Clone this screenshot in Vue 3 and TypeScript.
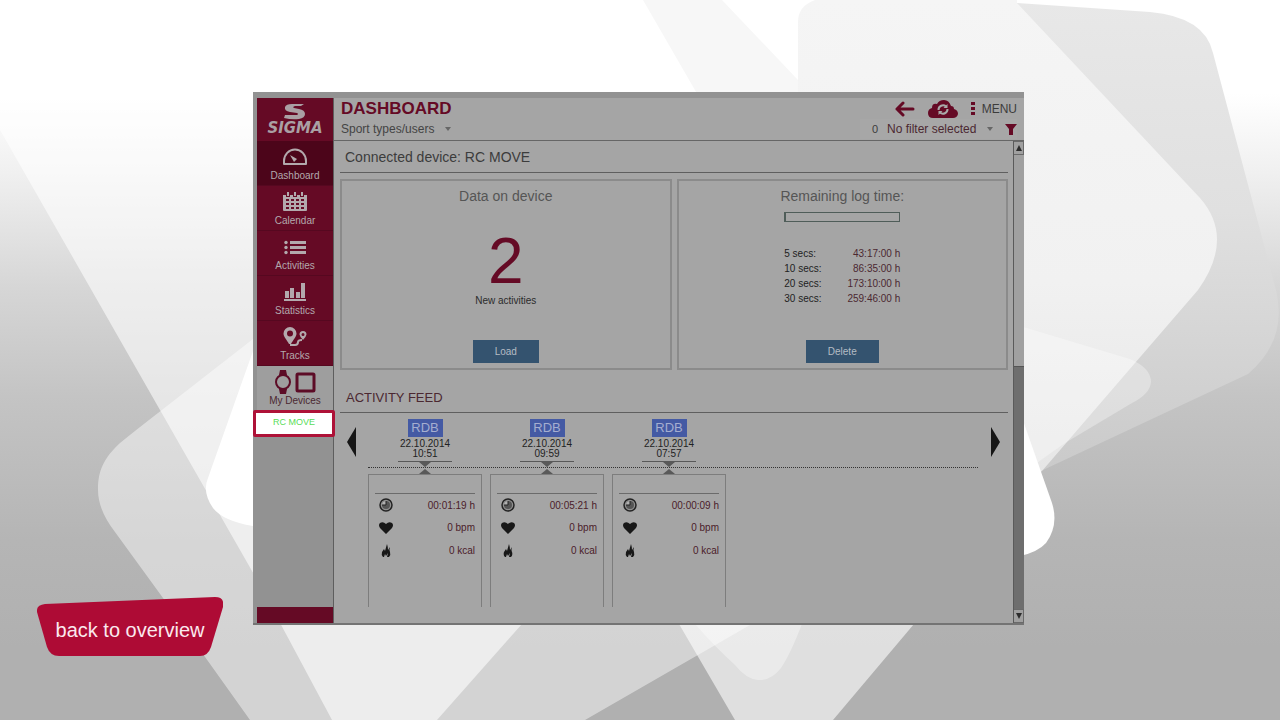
<script setup lang="ts">
import { ref } from 'vue'

interface NavItem { id: string; label: string }
interface LogRow { interval: string; time: string }
interface Activity { date: string; time: string; duration: string; pulse: string; energy: string }

const nav: NavItem[] = [
  { id: 'dashboard', label: 'Dashboard' },
  { id: 'calendar', label: 'Calendar' },
  { id: 'activities', label: 'Activities' },
  { id: 'statistics', label: 'Statistics' },
  { id: 'tracks', label: 'Tracks' },
  { id: 'devices', label: 'My Devices' },
]
const logRows: LogRow[] = [
  { interval: '5 secs:', time: '43:17:00 h' },
  { interval: '10 secs:', time: '86:35:00 h' },
  { interval: '20 secs:', time: '173:10:00 h' },
  { interval: '30 secs:', time: '259:46:00 h' },
]
const feed: Activity[] = [
  { date: '22.10.2014', time: '10:51', duration: '00:01:19 h', pulse: '0 bpm', energy: '0 kcal' },
  { date: '22.10.2014', time: '09:59', duration: '00:05:21 h', pulse: '0 bpm', energy: '0 kcal' },
  { date: '22.10.2014', time: '07:57', duration: '00:00:09 h', pulse: '0 bpm', energy: '0 kcal' },
]
const current = ref('dashboard')
</script>

<template>
  <div class="stage">
    <svg class="backdrop" viewBox="0 0 1280 720" preserveAspectRatio="none" aria-hidden="true">
      <defs>
        <linearGradient id="base" x1="0" y1="0" x2="0" y2="1">
          <stop offset="0.13" stop-color="#ffffff" />
          <stop offset="0.24" stop-color="#f0f0f0" />
          <stop offset="0.4" stop-color="#d6d6d6" />
          <stop offset="0.55" stop-color="#c4c4c4" />
          <stop offset="0.75" stop-color="#b5b5b5" />
          <stop offset="0.9" stop-color="#b0b0b0" />
        </linearGradient>
        <linearGradient id="leaf" gradientUnits="userSpaceOnUse" x1="0" y1="0" x2="0" y2="470">
          <stop offset="0" stop-color="#e8e8e8" />
          <stop offset="0.45" stop-color="#e0e0e0" />
          <stop offset="1" stop-color="#cacaca" />
        </linearGradient>
        <linearGradient id="petal" gradientUnits="userSpaceOnUse" x1="0" y1="0" x2="0" y2="470">
          <stop offset="0" stop-color="#f5f5f5" />
          <stop offset="0.6" stop-color="#f1f1f1" />
          <stop offset="1" stop-color="#e6e6e6" />
        </linearGradient>
      </defs>
      <rect width="1280" height="720" fill="url(#base)" />
      <path d="M98 490C98 470 104 458 120 443Q136 430 158 413L253 339L500 180H900L750 625L585 720H250L163 598L115 532Q98 510 98 490Z" fill="#fff" fill-opacity=".45" />
      <path d="M0 130V0H645L522 624L437 720H332L256 578Z" fill="#fff" fill-opacity=".58" />
      <path d="M643 0H722L798 80V130H718Z" fill="#f7f7f7" />
      <path d="M679 624H914L833 720H735Z" fill="#fff" fill-opacity=".6" />
      <path d="M695 624H802Q790 655 781 668Q771 681 758 680Q746 679 735 665Q716 648 695 624Z" fill="#fff" fill-opacity=".35" />
      <path d="M1017 3L1150 12Q1205 17 1213 53L1276 290Q1288 340 1248 374L1043 470L900 440V3Z" fill="url(#leaf)" />
      <path d="M815 0Q798 6 798 22V140H1000V500L1042 471L1135 363L1198 290Q1235 238 1200 198L1017 3V0Z" fill="url(#petal)" />
      <path d="M1020 326L1130 359Q1151 368 1151 382Q1150 394 1132 403L1065 443L1020 475Z" fill="#fff" fill-opacity=".32" />
      <path d="M253 351L208 478Q202 492 213 508Q223 521 253 526H300V351Z" fill="#fff" />
      <path d="M1020 412L1052 503Q1059 525 1046 543Q1038 552 1020 556Z" fill="#fff" />
    </svg>

    <a class="back" href="#overview">
      <svg viewBox="0 0 186 60" aria-hidden="true">
        <path d="M8 7L178 0Q188 0 186 10L174 50Q171 59 163 59H22Q13 59 10 50L0 15Q-1 8 8 7Z" fill="#ae0b35" />
      </svg>
      <span>back to overview</span>
    </a>

    <div class="app">
      <aside class="sidebar">
        <div class="logo">
          <svg width="22" height="16" viewBox="0 0 22 16" aria-hidden="true">
            <path d="M20 0H8Q2 0 1 3Q0 7 6 8L13 9Q15 10 13 11H1L0 14Q8 16 15 15Q21 14 21 10Q21 6 15 5L10 4Q8 3 11 2H17Z" fill="#aaa0a4" />
          </svg>
          <strong>SIGMA</strong>
        </div>
        <nav>
          <button v-for="item in nav" :key="item.id" type="button" :class="['nav-item', item.id, { current: current === item.id }]" @click="current = item.id">
            <svg v-if="item.id === 'dashboard'" width="24" height="18" viewBox="0 0 24 18">
              <path d="M1 16V13A11 11.500 0 0 1 23 13V16Z" fill="none" stroke="currentColor" stroke-width="2" stroke-linejoin="round" />
              <path d="M7 7L14 11L11 14Z" fill="currentColor" />
            </svg>
            <svg v-else-if="item.id === 'calendar'" width="24" height="19" viewBox="0 0 24 19">
              <path d="M0 3H24V18Q24 19 23 19H1Q0 19 0 18Z" fill="currentColor" />
              <path d="M5 0V5M12 0V5M19 0V5" stroke="#650a25" stroke-width="4" />
              <path d="M5 0V4M12 0V4M19 0V4" stroke="currentColor" stroke-width="2" />
              <path d="M3 7H6V9H3ZM8 7H11V9H8ZM13 7H16V9H13ZM18 7H21V9H18ZM3 11H6V13H3ZM8 11H11V13H8ZM13 11H16V13H13ZM18 11H21V13H18ZM3 15H6V17H3ZM8 15H11V17H8ZM13 15H16V17H13ZM18 15H21V17H18Z" fill="#650a25" />
            </svg>
            <svg v-else-if="item.id === 'activities'" width="24" height="18" viewBox="0 0 24 18">
              <path d="M7 3H23V6H7ZM7 8H23V11H7ZM7 13H23V16H7Z" fill="currentColor" />
              <circle cx="3" cy="4.500" r="1.700" fill="currentColor" />
              <circle cx="3" cy="9.500" r="1.700" fill="currentColor" />
              <circle cx="3" cy="14.500" r="1.700" fill="currentColor" />
            </svg>
            <svg v-else-if="item.id === 'statistics'" width="24" height="18" viewBox="0 0 24 18">
              <path d="M1 16H23V18H1ZM2 8H6V15H2ZM7 5H11V15H7ZM13 9H17V15H13ZM18 0H22V15H18Z" fill="currentColor" />
            </svg>
            <svg v-else-if="item.id === 'tracks'" width="24" height="19" viewBox="0 0 24 19">
              <path fill-rule="evenodd" d="M7 0A6.500 6.500 0 0 1 13.500 6.500C13.500 10 10 13 8 17H6C4 13 .5 10 .5 6.500A6.500 6.500 0 0 1 7 0ZM7 3.500A3 3 0 1 0 7 9.500A3 3 0 0 0 7 3.500Z" fill="currentColor" />
              <path fill-rule="evenodd" d="M20 4A3.500 3.500 0 0 1 23.500 7.500Q23 10 20 13Q17 10 16.500 7.500A3.500 3.500 0 0 1 20 4ZM20 6A1.500 1.500 0 1 0 20 9A1.500 1.500 0 0 0 20 6Z" fill="currentColor" />
              <path d="M7 18H12Q15 18 15 15Q15 13 19 13" fill="none" stroke="currentColor" stroke-width="2" />
            </svg>
            <svg v-else width="42" height="24" viewBox="0 0 42 24">
              <path d="M6 0H12L13 5H5ZM5 19H13L12 24H6Z" fill="currentColor" />
              <circle cx="9" cy="12" r="7" fill="#9e9e9e" stroke="currentColor" stroke-width="2" />
              <rect x="23" y="4" width="17" height="17" rx="1" fill="none" stroke="currentColor" stroke-width="3" />
            </svg>
            <span>{{ item.label }}</span>
          </button>
        </nav>
        <a class="device" href="#rc-move">RC MOVE</a>
        <div class="sidebar-foot"></div>
      </aside>

      <div class="content">
        <header>
          <div class="heading">
            <h1>DASHBOARD</h1>
            <label class="pick">
              <select aria-label="Sport types/users"><option>Sport types/users</option></select>
              <svg width="6" height="4" viewBox="0 0 6 4"><path d="M0 0H6L3 4Z" fill="#666" /></svg>
            </label>
          </div>
          <div class="tools">
            <div class="tool-row">
              <button type="button" aria-label="Back">
                <svg width="20" height="16" viewBox="0 0 20 16"><path d="M8 2L2 8L8 14M2 8H18" fill="none" stroke="#650a25" stroke-width="3" stroke-linecap="round" stroke-linejoin="round" /></svg>
              </button>
              <button type="button" aria-label="Synchronise">
                <svg width="30" height="18" viewBox="0 0 30 18">
                  <path d="M5 18Q0 18 0 13Q0 9 4 8Q4 3 9 4Q11 0 16 0Q21 0 23 6Q26 6 26 9Q30 10 30 14Q29 18 25 18Z" fill="#650a25" />
                  <path d="M10.500 10A4.500 4.500 0 0 1 18 6.500M19.500 9A4.500 4.500 0 0 1 12 12.500" fill="none" stroke="#aaa" stroke-width="2" />
                  <path d="M19.500 4V8H15.500ZM10.500 15V11H14.500Z" fill="#aaa" />
                </svg>
              </button>
              <button type="button" class="menu">
                <svg width="4" height="14" viewBox="0 0 4 14"><path d="M0 0H4V3H0ZM0 5H4V8H0ZM0 10H4V13H0Z" fill="#650a25" /></svg>
                <span>MENU</span>
              </button>
            </div>
            <div class="filter-row">
              <span class="count">0</span>
              <label class="pick filter">
                <select aria-label="Filter"><option>No filter selected</option></select>
                <svg width="6" height="4" viewBox="0 0 6 4"><path d="M0 0H6L3 4Z" fill="#666" /></svg>
              </label>
              <button type="button" aria-label="Filter settings">
                <svg width="12" height="11" viewBox="0 0 12 11"><path d="M0 0H12L8 5V11H4V5Z" fill="#650a25" /></svg>
              </button>
            </div>
          </div>
        </header>

        <div class="scroll-area">
          <main>
            <h2>Connected device: RC MOVE</h2>
            <div class="panels">
              <section class="panel">
                <h3>Data on device</h3>
                <div class="big">2</div>
                <p>New activities</p>
                <button type="button" class="action">Load</button>
              </section>
              <section class="panel">
                <h3>Remaining log time:</h3>
                <div class="meter"></div>
                <table>
                  <tbody>
                    <tr v-for="row in logRows" :key="row.interval">
                      <th scope="row">{{ row.interval }}</th>
                      <td>{{ row.time }}</td>
                    </tr>
                  </tbody>
                </table>
                <button type="button" class="action wide">Delete</button>
              </section>
            </div>

            <h2 class="feed-title">ACTIVITY FEED</h2>
            <div class="feed">
              <button type="button" class="step" aria-label="Previous">
                <svg width="9" height="30" viewBox="0 0 9 30"><path d="M9 0V30L0 15Z" fill="#161616" /></svg>
              </button>
              <div class="timeline">
                <div class="row marks">
                  <div v-for="a in feed" :key="a.time" class="mark">
                    <span class="tag">RDB</span>
                    <span>{{ a.date }}</span>
                    <span>{{ a.time }}</span>
                    <svg width="54" height="6" viewBox="0 0 54 6"><path d="M0 0H54V1H0ZM21 1H33L27 6Z" fill="#595959" /></svg>
                  </div>
                </div>
                <div class="row cards">
                  <div v-for="a in feed" :key="a.time" class="card-wrap">
                    <svg width="12" height="5" viewBox="0 0 12 5"><path d="M0 5H12L6 0Z" fill="#595959" /></svg>
                    <article class="card">
                      <div class="fact">
                        <svg width="14" height="14" viewBox="0 0 14 14">
                          <circle cx="7" cy="7" r="6" fill="#909090" stroke="#222" stroke-width="1.500" />
                          <circle cx="7" cy="7" r="4" fill="#555" />
                          <path d="M3 7A4 4 0 0 1 7 3V7Z" fill="#b0b0b0" />
                          <path d="M7 3V7H3" fill="none" stroke="#222" />
                        </svg>
                        <span>{{ a.duration }}</span>
                      </div>
                      <div class="fact">
                        <svg width="14" height="14" viewBox="0 0 14 14"><path d="M7 13L1 7Q-1 4 1 2Q4 0 7 3Q10 0 13 2Q15 4 13 7Z" fill="#181818" /></svg>
                        <span>{{ a.pulse }}</span>
                      </div>
                      <div class="fact">
                        <svg width="14" height="14" viewBox="0 0 14 14"><path d="M4 13Q2 11 3 8L5 5L6 7L8 0Q9 3 9 6L11 3Q10 6 11 8Q12 11 10 13H8L9 9L7 12L6 10L5 13Z" fill="#181818" /></svg>
                        <span>{{ a.energy }}</span>
                      </div>
                    </article>
                  </div>
                </div>
              </div>
              <button type="button" class="step" aria-label="Next">
                <svg width="9" height="30" viewBox="0 0 9 30"><path d="M0 0V30L9 15Z" fill="#161616" /></svg>
              </button>
            </div>
          </main>
          <div class="scrollbar">
            <button type="button" aria-label="Scroll up"><svg width="6" height="6" viewBox="0 0 6 6"><path d="M0 6H6L3 0Z" fill="#2c2c2c" /></svg></button>
            <div class="thumb"></div>
            <div class="track"></div>
            <button type="button" aria-label="Scroll down"><svg width="6" height="6" viewBox="0 0 6 6"><path d="M0 0H6L3 6Z" fill="#2c2c2c" /></svg></button>
          </div>
        </div>
      </div>
    </div>
  </div>
</template>

<style>
body { margin: 0; }
</style>

<style scoped>
* { box-sizing: border-box; }
.stage {
  position: relative;
  display: grid;
  grid-template-columns: 253fr 771fr 256fr;
  align-items: start;
  min-height: 100vh;
  padding-top: 92px;
  font-family: "Liberation Sans", Arial, sans-serif;
  color: #3c3c3c;
  overflow: hidden;
}
.backdrop { position: absolute; inset: 0; width: 100%; height: 100%; }
button { margin: 0; padding: 0; border: 0; background: none; font: inherit; color: inherit; cursor: pointer; }
button svg, .mark svg, .fact svg { display: block; flex: none; }
h1, h2, h3, p { margin: 0; font-weight: 400; }

.back {
  position: relative;
  display: grid;
  place-items: center;
  width: 186px;
  height: 60px;
  margin: 505px 0 0 37px;
  color: #fbe9ee;
  font-size: 20px;
  text-decoration: none;
}
.back svg { position: absolute; inset: 0; width: 100%; height: 100%; }
.back span { position: relative; padding-top: 6px; }

.app {
  position: relative;
  display: grid;
  grid-template-columns: 77px minmax(0, 1fr);
  padding: 6px 0 0 4px;
  background: #a5a5a5;
  border-bottom: 2px solid #747474;
  box-shadow: inset 4px 6px 0 #929292;
}
.sidebar { display: flex; flex-direction: column; background: #929292; border-right: 1px solid #5e5e5e; }
.logo {
  display: flex;
  flex-direction: column;
  align-items: center;
  height: 43px;
  padding-top: 6px;
  background: #650a25;
  color: #aaa0a4;
}
.logo strong { font: italic bold 15px/17px "DejaVu Sans", sans-serif; }
nav { display: flex; flex-direction: column; }
.nav-item {
  display: flex;
  flex-direction: column;
  align-items: center;
  justify-content: flex-end;
  gap: 3px;
  height: 45px;
  padding-bottom: 2px;
  background: #650a25;
  border-bottom: 1px solid #560820;
  color: #b3a9ad;
  font-size: 10px;
  line-height: 14px;
}
.nav-item.current { background: #4c051a; }
.nav-item.devices { gap: 0; height: 44px; background: #9e9e9e; border: 0; color: #5c0c26; }
.nav-item.devices span { color: #4b2831; }
.device {
  position: relative;
  display: grid;
  place-items: center;
  height: 27px;
  margin: 0 -2px 0 -4px;
  padding-bottom: 3px;
  background: #fff;
  border: 3px solid #ae1238;
  border-radius: 2px;
  color: #58dc58;
  font-size: 9px;
  text-decoration: none;
}
.sidebar-foot { height: 16px; margin-top: auto; background: #650a25; }

.content { display: flex; flex-direction: column; min-width: 0; }
header {
  display: flex;
  justify-content: space-between;
  height: 43px;
  padding: 0 7px;
  border-bottom: 1px solid #666;
}
h1 { color: #650a25; font-size: 17px; font-weight: 700; line-height: 22px; }
.pick { display: flex; align-items: center; gap: 10px; }
select {
  appearance: none;
  margin: 0;
  padding: 0;
  border: 0;
  background: none;
  color: #444;
  font: 12px/18px "Liberation Sans", Arial, sans-serif;
}
.tools { display: flex; flex-direction: column; align-items: flex-end; }
.tool-row { display: flex; align-items: center; gap: 13px; height: 21px; }
.menu { display: flex; align-items: center; gap: 7px; font-size: 12px; }
.filter-row { display: flex; align-items: center; gap: 12px; height: 20px; padding-left: 12px; background: #a7a7a7; font-size: 11px; }
.filter-row .count { margin-right: -3px; }
.filter-row select { color: #4b2831; }

.scroll-area { display: flex; flex: 1; }
main { flex: 1; min-width: 0; padding: 0 5px 16px 6px; }
h2 { height: 32px; margin-bottom: 6px; padding-left: 5px; border-bottom: 1px solid #5f5f5f; font-size: 14px; line-height: 32px; }
.panels { display: grid; grid-template-columns: 1fr 1fr; gap: 5px; }
.panel {
  display: flex;
  flex-direction: column;
  align-items: center;
  height: 191px;
  padding: 6px 0 5px;
  border: 2px solid #8b8b8b;
}
h3 { color: #555; font-size: 14px; line-height: 18px; }
.big { margin-top: 22px; color: #650a25; font-size: 64px; line-height: 68px; }
.panel p { color: #2b2b2b; font-size: 10px; line-height: 12px; }
.action { width: 66px; height: 23px; margin-top: auto; background: #34536f; color: #b4bcc4; font-size: 10px; }
.action.wide { width: 73px; }
.meter { width: 116px; height: 10px; margin-top: 7px; border: 1px solid #4f5d59; border-left-width: 2px; }
table { width: 116px; margin-top: 24px; border-collapse: collapse; font-size: 10px; line-height: 15px; }
th, td { padding: 0; font-weight: 400; }
th { color: #222; text-align: left; }
td { color: #4b2831; text-align: right; }

.feed-title { height: 31px; margin: 12px 0 6px; padding-left: 6px; color: #4b2831; font-size: 13px; }
.feed { display: flex; align-items: flex-start; padding: 0 8px 0 7px; }
.step { margin-top: 8px; }
.timeline { flex: 1; min-width: 0; margin: 0 13px 0 12px; }
.row { display: grid; grid-template-columns: repeat(3, 114px); gap: 8px; }
.marks { border-bottom: 1px dotted #333; }
.mark { display: flex; flex-direction: column; align-items: center; color: #222; font-size: 10px; line-height: 10px; }
.tag { width: 35px; height: 18px; margin-bottom: 2px; background: #445aa4; color: #a5aed0; font-size: 13px; line-height: 18px; text-align: center; }
.mark svg { margin-top: 2px; }
.cards { padding-top: 1px; }
.card-wrap { display: flex; flex-direction: column; align-items: center; }
.card { width: 100%; height: 133px; padding: 18px 6px 0; border: 1px solid #7d7d7d; border-bottom: 0; }
.fact { display: flex; align-items: center; justify-content: space-between; height: 23px; padding-left: 4px; color: #4b1c2a; font-size: 10px; }
.fact:first-child { border-top: 1px solid #6b6b6b; }

.scrollbar { display: flex; flex-direction: column; width: 11px; border-left: 1px solid #5a5a5a; background: #6e6e6e; }
.scrollbar button { display: grid; place-items: center; height: 14px; background: #a0a0a0; border: 1px solid #6a6a6a; border-left: 0; }
.thumb { flex: 212 1 0; background: #a0a0a0; border-bottom: 1px solid #555; }
.track { flex: 243 1 0; }
</style>
